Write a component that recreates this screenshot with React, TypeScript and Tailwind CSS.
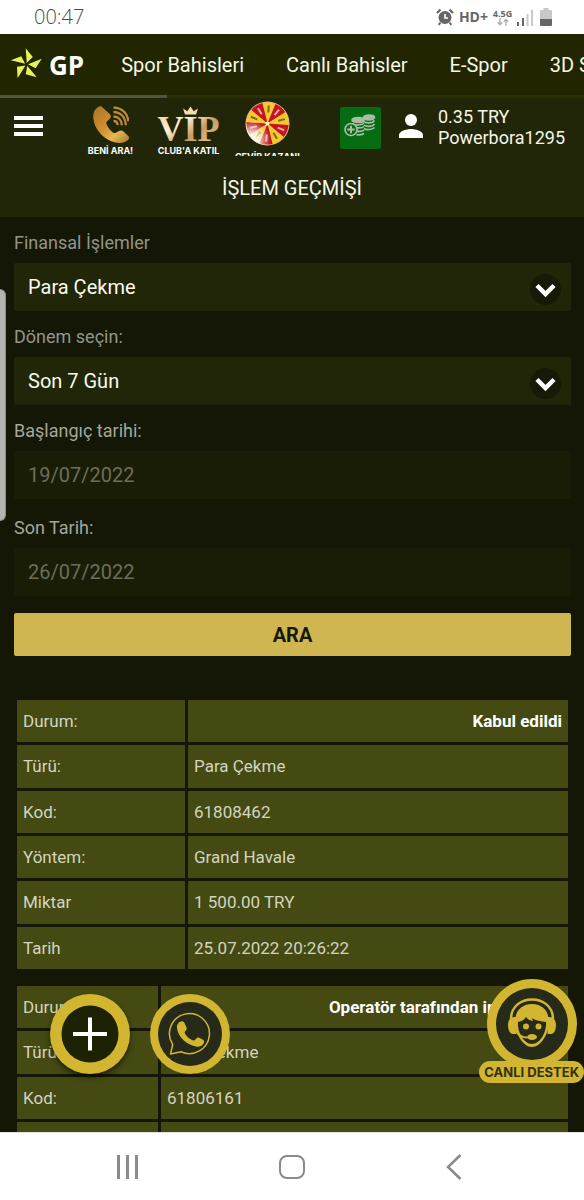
import type { ReactNode } from "react";

const NAV_LINKS = ["Spor Bahisleri", "Canlı Bahisler", "E-Spor", "3D Sporlar"];

type Row = { label: string; value: string; status?: boolean };

const FIRST: Row[] = [
  { label: "Durum:", value: "Kabul edildi", status: true },
  { label: "Türü:", value: "Para Çekme" },
  { label: "Kod:", value: "61808462" },
  { label: "Yöntem:", value: "Grand Havale" },
  { label: "Miktar", value: "1 500.00 TRY" },
  { label: "Tarih", value: "25.07.2022 20:26:22" },
];

const SECOND: Row[] = [
  { label: "Durum:", value: "Operatör tarafından iptal edildi", status: true },
  { label: "Türü:", value: "Para Çekme" },
  { label: "Kod:", value: "61806161" },
  { label: "Yöntem:", value: "Grand Havale" },
  { label: "Miktar", value: "1 500.00 TRY" },
  { label: "Tarih", value: "25.07.2022 19:58:10" },
];

function StatusBar() {
  return (
    <div className="flex h-[34px] shrink-0 items-center justify-between bg-white pr-8 pl-[34px] text-[#666]">
      <span className="font-['Open_Sans',sans-serif] text-xl font-light text-[#4a4a4a]">00:47</span>
      <div className="flex items-center gap-[5px]">
        <svg width="18" height="18" viewBox="0 0 18 18" fill="none" stroke="#666">
          <circle cx="9" cy="9.5" r="6.5" fill="#666" stroke="none" />
          <path d="M9 6v4h3" stroke="#fff" strokeWidth="1.6" />
          <path d="M1 5l3.5-3.500M17 5l-3.500-3.500" strokeWidth="2.200" />
          <path d="M4.500 14.500l-1.800 2.300M13.500 14.500l1.800 2.300" strokeWidth="2" />
        </svg>
        <span className="font-['Open_Sans',sans-serif] text-sm font-bold">HD+</span>
        <div className="flex w-[19px] flex-col items-center">
          <span className="font-['Open_Sans',sans-serif] text-[9px] leading-[9px] font-bold">4.5G</span>
          <svg width="12" height="8" viewBox="0 0 12 8" fill="none" stroke="#b0b0b0" strokeWidth="1.400">
            <path d="M3 0v6.500M.7 4.300L3 6.800l2.300-2.500M9 8V1.300M6.700 3.700L9 1.200l2.300 2.500" />
          </svg>
        </div>
        <svg width="16" height="17" viewBox="0 0 16 17">
          <path d="M0 13h2v4H0zM5 9h2v8H5z" fill="#666" />
          <path d="M9.500 5h2v12h-2zM14 1h2v16h-2z" fill="#c8c8c8" />
        </svg>
        <svg className="ml-[2px]" width="12" height="18" viewBox="0 0 12 18">
          <path d="M3.500 0h5v2H11a1 1 0 0 1 1 1v8H0V3a1 1 0 0 1 1-1h2.500z" fill="#c8c8c8" />
          <path d="M0 11h12v6a1 1 0 0 1-1 1H1a1 1 0 0 1-1-1z" fill="#666" />
        </svg>
      </div>
    </div>
  );
}

function Logo() {
  return (
    <a href="#" aria-label="GP" className="flex items-center gap-[6px] text-white">
      <svg width="33" height="34" viewBox="-16.500 -16.500 33 34">
        {[0, 72, 144, 216, 288].map((deg) => (
          <path key={deg} d="M-.8-16.300L6.300-7.500L.2-1.500z" fill="#e6f25a" transform={`rotate(${deg})`} />
        ))}
      </svg>
      <span className="font-['Open_Sans',sans-serif] text-[26px] leading-8 font-bold">GP</span>
    </a>
  );
}

function TopNav() {
  return (
    <nav className="shrink-0 overflow-hidden bg-[#212600]">
      <div className="flex h-[61px] items-center pl-[10px] whitespace-nowrap">
        <Logo />
        <div className="flex gap-[42px] pl-[37px] text-xl text-[#f4f6e6]">
          {NAV_LINKS.map((label) => (
            <a key={label} href="#">
              {label}
            </a>
          ))}
        </div>
      </div>
      <div className="h-[3px] bg-[#2c3103]">
        <div className="h-full w-[167px] bg-[#52543c]" />
      </div>
    </nav>
  );
}

function GoldPhone() {
  return (
    <svg width="36" height="37" viewBox="0 0 36 37" fill="none">
      <defs>
        <linearGradient id="gold" x1="0" y1="0" x2="1" y2="1">
          <stop offset="0" stopColor="#a8742a" />
          <stop offset=".45" stopColor="#d08f2e" />
          <stop offset=".7" stopColor="#e6b650" />
          <stop offset="1" stopColor="#a8782c" />
        </linearGradient>
      </defs>
      <path
        d="M4.500 1.500C1 4 0 8 .3 12c1 12 10.700 22 22.200 24.500 5 1 9.500 0 12.500-2.500 1.200-1 1.300-2.500.5-3.800l-5-4.700c-1.500-1.400-3-1.400-4.500-.5l-3 1.700c-1.300.7-2.400.5-3.500-.4-3-2.500-4.800-5-6-8.200-.5-1.400-.3-2.200.9-3.200l2.200-1.900c1.300-1.200 1.500-2.600.7-4.400L9.500 1.500C8.500-.2 6.500 0 4.500 1.500z"
        fill="url(#gold)"
      />
      <path
        d="M20.500 15c2.500 0 4 1.500 4.200 4.200M20.500 10.500c5 .2 8.200 3.500 8.400 8.700M20.500 6c7.500.3 12 5.500 12.300 13.200M20.500 1.700c9 .2 14.500 6.300 14.700 13.500"
        stroke="#bd8b38"
        strokeWidth="2.300"
      />
    </svg>
  );
}

function VipMark() {
  return (
    <svg className="overflow-visible" width="63" height="37" viewBox="0 0 63 37">
      <defs>
        <linearGradient id="vip" x1="0" y1="0" x2="1" y2="1">
          <stop offset="0" stopColor="#e9c98f" />
          <stop offset=".35" stopColor="#fff3d6" />
          <stop offset=".6" stopColor="#c79a62" />
          <stop offset="1" stopColor="#f3dcae" />
        </linearGradient>
      </defs>
      <text
        x="31.500"
        y="35"
        textAnchor="middle"
        fill="url(#vip)"
        fontFamily="Liberation Serif, serif"
        fontWeight="700"
        fontSize="36"
      >
        VIP
      </text>
      <path d="M28 8.500L26 2.500l4.300 2.700L33.500.5l3.200 4.700L41 2.500l-2 6z" fill="#f3dcae" />
    </svg>
  );
}

function Wheel() {
  const slices = Array.from({ length: 10 }, (_, i) => i * 36);
  return (
    <svg width="45" height="45" viewBox="-22.500 -22.500 45 45">
      <defs>
        <radialGradient id="shine" cx=".12" cy=".88" r=".45">
          <stop offset="0" stopColor="#fff" />
          <stop offset=".4" stopColor="#fff" stopOpacity=".75" />
          <stop offset="1" stopColor="#fff" stopOpacity="0" />
        </radialGradient>
      </defs>
      <circle r="22" fill="#e0b48c" />
      {slices.map((deg, i) => (
        <g key={deg} transform={`rotate(${deg + 4})`}>
          <path d="M0 0L-6.500-20A21 21 0 0 1 6.500-20z" fill={i % 2 ? "#c4141f" : "#f8c928"} />
          <path d="M0-18v7" stroke={i % 2 ? "#f0a8a0" : "#7a6a20"} strokeWidth="2" />
        </g>
      ))}
      <circle r="22" fill="url(#shine)" />
      <circle r="2" fill="#fff1c4" />
    </svg>
  );
}

function Coins() {
  return (
    <svg width="32" height="24" viewBox="0 0 32 24" fill="none" stroke="#a9bca4" strokeWidth="1.700">
      <ellipse cx="25" cy="3.500" rx="5.500" ry="2.300" fill="#a9bca4" />
      <path d="M20 7.500c2 2 8.500 2 10.500-1M20 11c2 2 8.500 2 10.500-1M20 14.500c2 1.500 8.500 1.500 10.500-1" />
      <ellipse cx="14" cy="6" rx="6" ry="2.500" fill="#a9bca4" />
      <path d="M9 10c2.500 1.500 9 1.500 11-1M12 13.800c3 .3 7-.2 8-1.300M13 17.300c3 .3 6-.2 7-1.300M12.500 20.700c3 .3 6.500-.2 7.500-1.300" />
      <circle cx="7" cy="15.500" r="6" fill="#066c12" />
      <path d="M7 11.800v7.400M3.300 15.500h7.400" strokeWidth="2" />
    </svg>
  );
}

function Promo({ width, caption, children }: { width: string; caption: string; children: ReactNode }) {
  return (
    <a href="#" className={`flex flex-col items-center text-white ${width}`}>
      {children}
      <span className="font-[Inter,sans-serif] text-[9px] leading-4 font-bold whitespace-nowrap">{caption}</span>
    </a>
  );
}

function Header() {
  return (
    <header className="shrink-0 bg-[#222609]">
      <div className="flex h-[61px] items-start pr-[19px] pl-[14px]">
        <button aria-label="Menü" className="mt-[18px] flex w-[29px] shrink-0 flex-col gap-1">
          <span className="h-1 bg-white" />
          <span className="h-1 bg-white" />
          <span className="h-1 bg-white" />
        </button>
        <div className="ml-11 flex gap-[15px]">
          <div className="mr-2 pt-2">
            <Promo width="w-[47px]" caption="BENİ ARA!">
              <GoldPhone />
            </Promo>
          </div>
          <div className="pt-2">
            <Promo width="w-[63px]" caption="CLUB'A KATIL">
              <VipMark />
            </Promo>
          </div>
          <div className="pt-[3px]">
            <a href="#" className="flex w-[65px] flex-col items-center text-white">
              <Wheel />
              <span className="mt-[5px] h-[5px] overflow-hidden font-[Inter,sans-serif] text-[9px] leading-[11px] font-bold whitespace-nowrap">
                ÇEVİR KAZAN!
              </span>
            </a>
          </div>
        </div>
        <div className="ml-auto flex items-start">
          <button
            aria-label="Para yatır"
            className="mt-[9px] flex h-[42px] w-[41px] items-center justify-center rounded-xs bg-[#066c12] pb-1"
          >
            <Coins />
          </button>
          <a href="#" className="ml-[18px] flex items-start gap-[15px] text-lg leading-[21px] text-[#f4f6e6]">
            <svg className="mt-4" width="24" height="24" viewBox="0 0 24 24" fill="#fff">
              <circle cx="12" cy="6" r="6" />
              <path d="M0 24v-3c0-4 8-6 12-6s12 2 12 6v3z" />
            </svg>
            <span className="mt-2 flex flex-col">
              <span>0.35 TRY</span>
              <span>Powerbora1295</span>
            </span>
          </a>
        </div>
      </div>
      <h1 className="pt-[17px] pb-4 text-center text-xl leading-[25px] text-[#f4f6e6]">İŞLEM GEÇMİŞİ</h1>
    </header>
  );
}

function SelectField({ id, label, options }: { id: string; label: string; options: string[] }) {
  return (
    <div>
      <label htmlFor={id} className="block text-lg leading-6 text-[#93948a]">
        {label}
      </label>
      <div className="relative mt-2">
        <select
          id={id}
          className="block h-12 w-full appearance-none rounded-xs bg-[#222609] px-[14px] text-xl text-[#f8faec]"
        >
          {options.map((o) => (
            <option key={o}>{o}</option>
          ))}
        </select>
        <span className="pointer-events-none absolute inset-y-0 right-[10px] flex items-center pt-1">
          <svg width="31" height="31" viewBox="0 0 31 31" fill="none">
            <circle cx="15.500" cy="15.500" r="15.500" fill="#171a07" />
            <path d="M7 11.500l8.500 8.500 8.500-8.500" stroke="#fff" strokeWidth="4.500" />
          </svg>
        </span>
      </div>
    </div>
  );
}

function DateField({ id, label, value }: { id: string; label: string; value: string }) {
  return (
    <div>
      <label htmlFor={id} className="block text-lg leading-6 text-[#a5a69c]">
        {label}
      </label>
      <input
        id={id}
        disabled
        defaultValue={value}
        className="mt-2 block h-12 w-full rounded-xs bg-[#1a1d06] px-[14px] text-xl text-[#6b6d5d]"
      />
    </div>
  );
}

function Transaction({ rows, labelWidth }: { rows: Row[]; labelWidth: string }) {
  return (
    <table className="h-[275px] w-full table-fixed border-separate border-spacing-[3px] text-[17px] leading-6 text-[#d3d5c0]">
      <tbody>
        {rows.map((row) => (
          <tr key={row.label}>
            <th scope="row" className={`bg-[#444a12] px-[6px] py-0 text-left font-normal ${labelWidth}`}>
              {row.label}
            </th>
            <td className={`bg-[#444a12] px-[6px] py-0 ${row.status ? "text-right font-bold text-white" : ""}`}>
              {row.value}
            </td>
          </tr>
        ))}
      </tbody>
    </table>
  );
}

function Support() {
  return (
    <a href="#" aria-label="Canlı destek" className="absolute right-0 bottom-[49px] flex flex-col items-center">
      <svg className="-mb-2" width="90" height="90" viewBox="0 0 90 90" fill="none">
        <circle cx="45" cy="45" r="45" fill="#d2b530" />
        <circle cx="45" cy="45" r="36" fill="#262a18" />
        <path d="M24 40C24 14 66 14 66 40" stroke="#d2b530" strokeWidth="2.500" />
        <path d="M28.500 43C26 19 64 19 61.500 43c1 10-7 25-16.500 25S27.500 53 28.500 43z" fill="#d2b530" />
        <path d="M27 39C27.500 18 62.500 18 63 39" stroke="#262a18" strokeWidth="1.500" />
        <path
          d="M31 43c4-.5 6.500-2.500 8-5 1.500 2.500 4 3.500 7 4l-1-3c4 3 9 3 14 4 1 9-5.500 22-14 22S30 52 31 43z"
          fill="#262a18"
        />
        <path d="M27.500 38c-4 0-6.500 3-6.500 8s2 9 5 9h3.500V38zM62.500 38c4 0 6.500 3 6.500 8s-2 9-5 9h-3.500V38z" fill="#d2b530" />
        <path d="M29 52c3 5 7 6.500 11 6.500" stroke="#d2b530" strokeWidth="2" />
        <circle cx="39" cy="47.500" r="3" fill="#d2b530" />
        <circle cx="51.500" cy="47.500" r="3" fill="#d2b530" />
        <ellipse cx="45" cy="58" rx="5" ry="3" fill="#d2b530" />
      </svg>
      <span className="rounded-full bg-[#d2b530] px-[5px] font-[Inter,sans-serif] text-[13px] leading-[22px] font-bold whitespace-nowrap text-[#33310f]">
        CANLI DESTEK
      </span>
    </a>
  );
}

function FloatingActions() {
  return (
    <div className="absolute bottom-[58px] left-[50px] flex gap-5">
      <button aria-label="Ekle" className="rounded-full shadow-md shadow-black/50">
        <svg width="80" height="80" viewBox="0 0 80 80">
          <circle cx="40" cy="40" r="40" fill="#d2b530" />
          <circle cx="40" cy="40" r="28.500" fill="#1e2204" />
          <path d="M40 23.500v33M23 40h34" stroke="#fff" strokeWidth="4" />
        </svg>
      </button>
      <a href="#" aria-label="WhatsApp">
        <svg width="80" height="80" viewBox="0 0 80 80" fill="none">
          <circle cx="40" cy="40" r="40" fill="#d2b530" />
          <circle cx="40" cy="40" r="32" fill="#262a18" />
          <path
            d="M20.500 60l2.200-9.500A20 20 0 1 1 31 57.700z"
            stroke="#d2b530"
            strokeWidth="1.500"
            strokeLinejoin="round"
          />
          <path
            d="M29.500 28c2-1.500 4-1 5 1l2 4.500c.5 1.300.2 2.200-.8 3.200-1.300 1.300-1.200 1.900-.4 3.300 1.700 2.800 4.200 4.900 7.200 6.300 1.200.5 1.900.4 2.700-.5l1.300-1.500c.8-.9 1.700-1 2.800-.5l3.700 1.900c1.300.7 1.300 1.600.9 3-1 3-4.400 4.700-7.900 3.900C36 50.200 28.500 43.500 27 34.500c-.4-2.700.5-5 2.500-6.500z"
            fill="#d2b530"
          />
        </svg>
      </a>
    </div>
  );
}

function SystemNav() {
  return (
    <div className="flex h-[68px] shrink-0 items-center justify-center gap-[141px] border-t border-[#e4e4dc] bg-white pr-[6px] text-[#8a8a8a]">
      <button aria-label="Son uygulamalar" className="flex h-6 w-[21px] justify-between">
        <span className="w-[3px] bg-current" />
        <span className="w-[3px] bg-current" />
        <span className="w-[3px] bg-current" />
      </button>
      <button aria-label="Ana ekran" className="h-6 w-[26px] rounded-lg border-2 border-current" />
      <button aria-label="Geri">
        <svg width="16" height="26" viewBox="0 0 16 26" fill="none" stroke="currentColor" strokeWidth="2.500">
          <path d="M14.500 1L2 13l12.500 12" />
        </svg>
      </button>
    </div>
  );
}

export default function App() {
  return (
    <div className="flex h-screen flex-col overflow-hidden bg-[#141705] font-[Roboto,sans-serif]">
      <StatusBar />
      <TopNav />
      <div className="relative flex min-h-0 flex-1 flex-col overflow-hidden">
        <Header />
        <main className="min-h-0 flex-1 overflow-hidden pt-[14px] pr-[13px] pl-[14px]">
          <form className="flex flex-col gap-[17px]" onSubmit={(e) => e.preventDefault()}>
            <div className="flex flex-col gap-[14px]">
              <SelectField id="islem" label="Finansal İşlemler" options={["Para Çekme", "Para Yatırma"]} />
              <SelectField id="donem" label="Dönem seçin:" options={["Son 7 Gün", "Son 30 Gün"]} />
              <DateField id="baslangic" label="Başlangıç tarihi:" value="19/07/2022" />
            </div>
            <DateField id="son" label="Son Tarih:" value="26/07/2022" />
            <button className="h-[43px] rounded-xs bg-[#cfb650] text-xl font-bold text-[#16180a]">ARA</button>
          </form>
          <div className="mt-[41px] flex flex-col gap-[11px]">
            <Transaction rows={FIRST} labelWidth="w-[168px]" />
            <Transaction rows={SECOND} labelWidth="w-[141px]" />
          </div>
        </main>
        <div className="absolute top-[191px] left-0 h-[232px] w-[6px] rounded-r-md border-y border-r border-[#8b8c84] bg-[#b4b5ae]" />
        <FloatingActions />
        <Support />
      </div>
      <SystemNav />
    </div>
  );
}
